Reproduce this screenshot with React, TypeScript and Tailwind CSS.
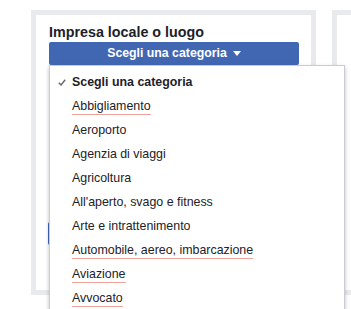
import React from 'react'

const categories: { label: string; flagged?: boolean }[] = [
  { label: 'Abbigliamento', flagged: true },
  { label: 'Aeroporto' },
  { label: 'Agenzia di viaggi' },
  { label: 'Agricoltura' },
  { label: "All'aperto, svago e fitness" },
  { label: 'Arte e intrattenimento' },
  { label: 'Automobile, aereo, imbarcazione', flagged: true },
  { label: 'Aviazione', flagged: true },
  { label: 'Avvocato', flagged: true },
]

export default function App() {
  return (
    <div
      className="relative h-[309px] w-[351px] overflow-hidden bg-white"
      style={{ fontFamily: '"Liberation Sans", Arial, sans-serif' }}
    >
      <div className="flex gap-[16px] pl-[31px] pt-[10px]">
        <section className="h-[285px] w-[285px] shrink-0 border-[5px] border-[#e9eaed] bg-white">
          <div className="flex flex-col pl-[13px] pr-[12px] pt-[8px]">
            <h2 className="text-[14.3px] font-bold leading-[19px] text-[#1d2129]">Impresa locale o luogo</h2>
            <button className="flex h-[23px] w-[250px] items-center justify-center gap-[6px] rounded-[2px] bg-[#4267b2] text-[12.3px] font-bold text-white">
              Scegli una categoria
              <svg width="8" height="5" viewBox="0 0 8 5" aria-hidden>
                <path d="M0 0h8L4 5z" fill="#fff" />
              </svg>
            </button>
            {/* next button, mostly hidden behind the open menu */}
            <div className="ml-[-1px] mt-[157px] h-[23px] w-[250px] rounded-[2px] bg-[#4267b2]" />
          </div>
        </section>
        <section className="h-[285px] w-[200px] shrink-0 border-[5px] border-[#e9eaed] bg-white" />
      </div>

      <ul className="absolute left-[49px] top-[65px] w-[296px] border border-[#c9ccd1] bg-white pb-[20px] pt-[4px] shadow-[0_2px_4px_rgba(0,0,0,0.25)]">
        <li className="relative flex h-[24px] items-center pl-[22px] text-[12.4px] font-bold text-[#1d2129]">
          <svg className="absolute left-[8px] top-[9px]" width="8" height="7" viewBox="0 0 8 7" aria-hidden>
            <path d="M0.8 3.8L3 6L7.2 0.8" fill="none" stroke="#606770" strokeWidth="1.4" />
          </svg>
          Scegli una categoria
        </li>
        {categories.map((c) => (
          <li key={c.label} className="flex h-[24px] items-center pl-[22px] text-[12.4px] text-[#1d2129]">
            <span
              className={
                c.flagged
                  ? 'inline-block border-b border-[#eba39b] pt-[1px] leading-[15px]'
                  : 'inline-block leading-[15px]'
              }
            >
              {c.label}
            </span>
          </li>
        ))}
      </ul>
    </div>
  )
}
